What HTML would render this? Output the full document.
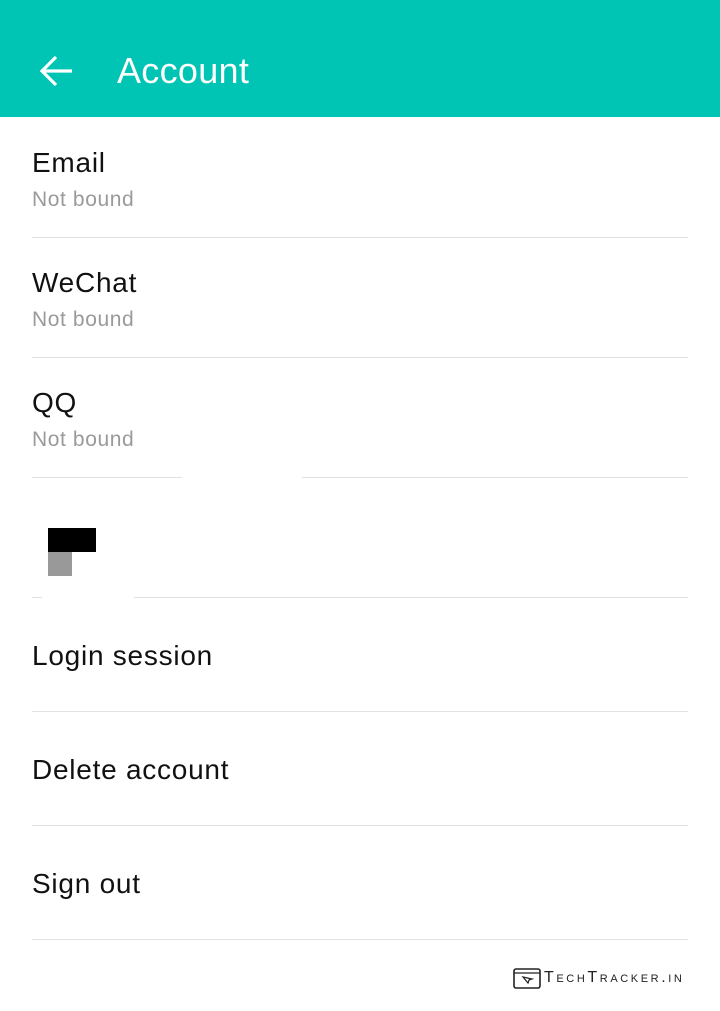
<!DOCTYPE html>
<html><head><style>
body{margin:0;width:720px;height:1011px;background:#fff;position:relative;font-family:"Liberation Sans",Roboto,sans-serif;overflow:hidden}
.h{position:absolute;left:0;top:0;width:720px;height:117px;background:#00c4b4}
.t{position:absolute;left:117px;top:50px;font-size:36px;color:#fff;line-height:42px;letter-spacing:0.3px}
.a{position:absolute;white-space:nowrap}
.ti{font-size:28px;color:#111;line-height:32px;letter-spacing:0.75px}
.su{font-size:21px;color:#9a9a9a;line-height:24px;letter-spacing:0.6px}
.ln{position:absolute;left:32px;width:656px;height:1px;background:#e2e2e2}
</style></head><body>
<div class="h"></div>
<svg style="position:absolute;left:39px;top:55px" width="34" height="32" viewBox="0 0 34 32"><path d="M33 16H3M17 2L3 16l14 14" stroke="#fff" stroke-width="3.2" fill="none"/></svg>
<div class="t">Account</div>

<div class="a ti" style="left:32px;top:147px">Email</div>
<div class="a su" style="left:32px;top:188px">Not bound</div>
<div class="ln" style="top:237px"></div>
<div class="a ti" style="left:32px;top:267px">WeChat</div>
<div class="a su" style="left:32px;top:308px">Not bound</div>
<div class="ln" style="top:357px"></div>
<div class="a ti" style="left:32px;top:387px">QQ</div>
<div class="a su" style="left:32px;top:428px">Not bound</div>
<div class="ln" style="top:477px;width:150px"></div>
<div class="ln" style="top:477px;left:302px;width:386px"></div>
<div style="position:absolute;left:48px;top:528px;width:48px;height:24px;background:#000"></div>
<div style="position:absolute;left:48px;top:552px;width:24px;height:24px;background:#999"></div>
<div class="ln" style="top:597px;width:10px"></div>
<div class="ln" style="top:597px;left:134px;width:554px"></div>
<div class="a ti" style="left:32px;top:640px">Login session</div>
<div class="ln" style="top:711px"></div>
<div class="a ti" style="left:32px;top:754px">Delete account</div>
<div class="ln" style="top:825px"></div>
<div class="a ti" style="left:32px;top:868px">Sign out</div>
<div class="ln" style="top:939px"></div>

<svg style="position:absolute;left:513px;top:968px" width="28" height="21" viewBox="0 0 28 21"><rect x="1" y="1" width="26" height="19" rx="2" fill="none" stroke="#222" stroke-width="1.6"/><line x1="1" y1="5" x2="27" y2="5" stroke="#222" stroke-width="1.2"/><path d="M10 9l5 6 1-3 3-1z" fill="none" stroke="#222" stroke-width="1.2"/></svg>
<div class="a" style="left:544px;top:969px;font-size:16px;letter-spacing:2.6px;color:#222;font-variant:small-caps">TechTracker.in</div>
</body></html>
